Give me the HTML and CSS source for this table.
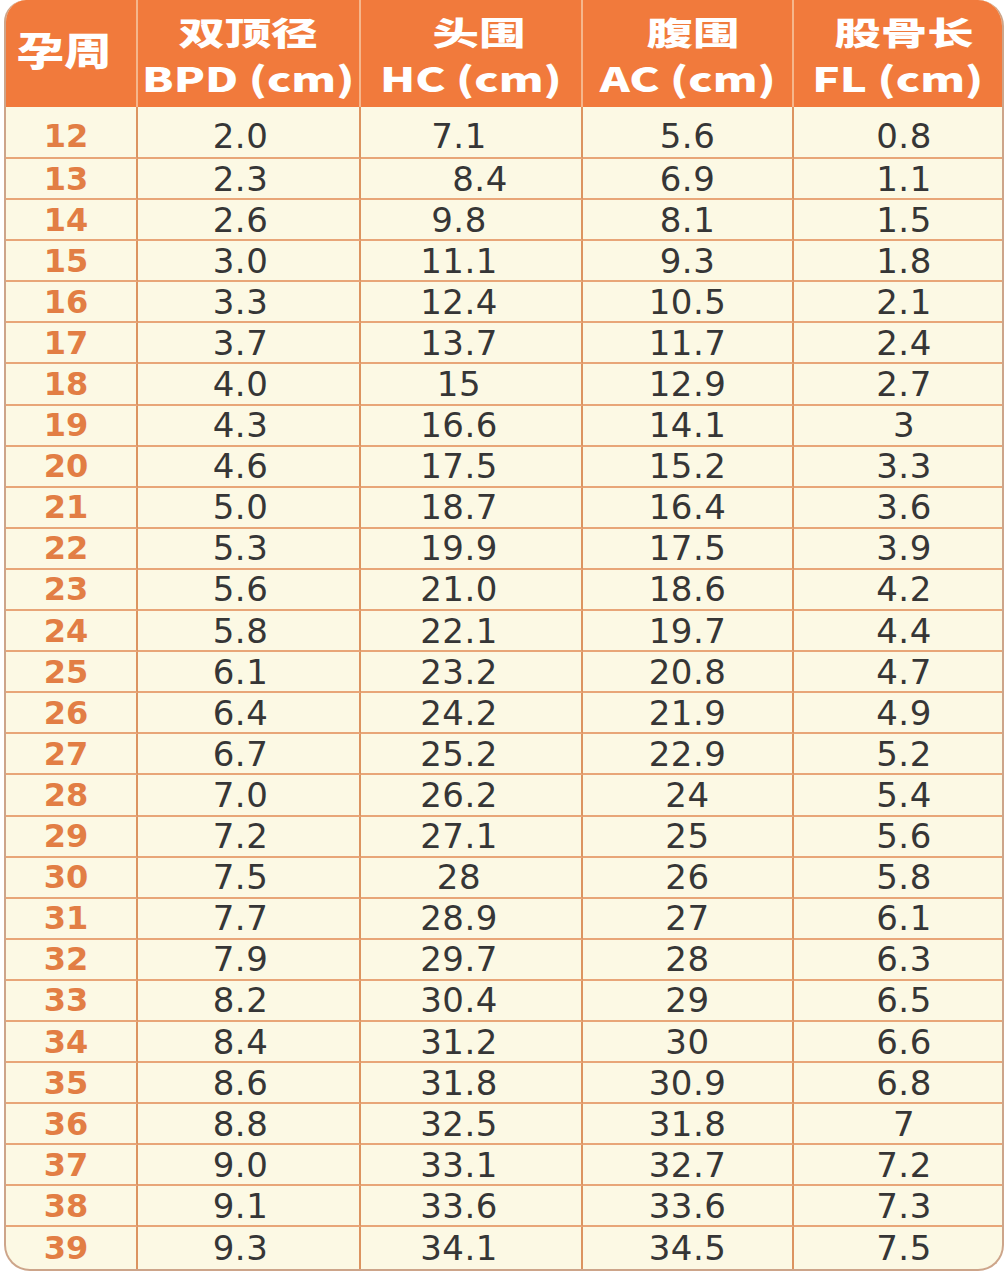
FILE: index.html
```html
<!DOCTYPE html>
<html lang="zh-CN">
<head>
<meta charset="utf-8">
<title>孕周胎儿发育标准表</title>
<link rel="stylesheet" href="styles.css">
</head>
<body>
<div class="sheet">
  <div class="grid">
    <div class="hd hd-week"><span class="t-big">孕周</span></div>
    <div class="hd"><span class="t-cn">双顶径</span><span class="t-en">BPD (cm)</span></div>
    <div class="hd hd-hc"><span class="t-cn">头围</span><span class="t-en">HC (cm)</span></div>
    <div class="hd hd-ac"><span class="t-cn">腹围</span><span class="t-en">AC (cm)</span></div>
    <div class="hd hd-last"><span class="t-cn">股骨长</span><span class="t-en">FL (cm)</span></div>

    <div class="c wk first">12</div><div class="c bpd first">2.0</div><div class="c hc first">7.1</div><div class="c ac first">5.6</div><div class="c fl first">0.8</div>
    <div class="c wk">13</div><div class="c bpd">2.3</div><div class="c hc hc-off">8.4</div><div class="c ac">6.9</div><div class="c fl">1.1</div>
    <div class="c wk">14</div><div class="c bpd">2.6</div><div class="c hc">9.8</div><div class="c ac">8.1</div><div class="c fl">1.5</div>
    <div class="c wk">15</div><div class="c bpd">3.0</div><div class="c hc">11.1</div><div class="c ac">9.3</div><div class="c fl">1.8</div>
    <div class="c wk">16</div><div class="c bpd">3.3</div><div class="c hc">12.4</div><div class="c ac">10.5</div><div class="c fl">2.1</div>
    <div class="c wk">17</div><div class="c bpd">3.7</div><div class="c hc">13.7</div><div class="c ac">11.7</div><div class="c fl">2.4</div>
    <div class="c wk">18</div><div class="c bpd">4.0</div><div class="c hc">15</div><div class="c ac">12.9</div><div class="c fl">2.7</div>
    <div class="c wk">19</div><div class="c bpd">4.3</div><div class="c hc">16.6</div><div class="c ac">14.1</div><div class="c fl">3</div>
    <div class="c wk">20</div><div class="c bpd">4.6</div><div class="c hc">17.5</div><div class="c ac">15.2</div><div class="c fl">3.3</div>
    <div class="c wk">21</div><div class="c bpd">5.0</div><div class="c hc">18.7</div><div class="c ac">16.4</div><div class="c fl">3.6</div>
    <div class="c wk">22</div><div class="c bpd">5.3</div><div class="c hc">19.9</div><div class="c ac">17.5</div><div class="c fl">3.9</div>
    <div class="c wk">23</div><div class="c bpd">5.6</div><div class="c hc">21.0</div><div class="c ac">18.6</div><div class="c fl">4.2</div>
    <div class="c wk">24</div><div class="c bpd">5.8</div><div class="c hc">22.1</div><div class="c ac">19.7</div><div class="c fl">4.4</div>
    <div class="c wk">25</div><div class="c bpd">6.1</div><div class="c hc">23.2</div><div class="c ac">20.8</div><div class="c fl">4.7</div>
    <div class="c wk">26</div><div class="c bpd">6.4</div><div class="c hc">24.2</div><div class="c ac">21.9</div><div class="c fl">4.9</div>
    <div class="c wk">27</div><div class="c bpd">6.7</div><div class="c hc">25.2</div><div class="c ac">22.9</div><div class="c fl">5.2</div>
    <div class="c wk">28</div><div class="c bpd">7.0</div><div class="c hc">26.2</div><div class="c ac">24</div><div class="c fl">5.4</div>
    <div class="c wk">29</div><div class="c bpd">7.2</div><div class="c hc">27.1</div><div class="c ac">25</div><div class="c fl">5.6</div>
    <div class="c wk">30</div><div class="c bpd">7.5</div><div class="c hc">28</div><div class="c ac">26</div><div class="c fl">5.8</div>
    <div class="c wk">31</div><div class="c bpd">7.7</div><div class="c hc">28.9</div><div class="c ac">27</div><div class="c fl">6.1</div>
    <div class="c wk">32</div><div class="c bpd">7.9</div><div class="c hc">29.7</div><div class="c ac">28</div><div class="c fl">6.3</div>
    <div class="c wk">33</div><div class="c bpd">8.2</div><div class="c hc">30.4</div><div class="c ac">29</div><div class="c fl">6.5</div>
    <div class="c wk">34</div><div class="c bpd">8.4</div><div class="c hc">31.2</div><div class="c ac">30</div><div class="c fl">6.6</div>
    <div class="c wk">35</div><div class="c bpd">8.6</div><div class="c hc">31.8</div><div class="c ac">30.9</div><div class="c fl">6.8</div>
    <div class="c wk">36</div><div class="c bpd">8.8</div><div class="c hc">32.5</div><div class="c ac">31.8</div><div class="c fl">7</div>
    <div class="c wk">37</div><div class="c bpd">9.0</div><div class="c hc">33.1</div><div class="c ac">32.7</div><div class="c fl">7.2</div>
    <div class="c wk">38</div><div class="c bpd">9.1</div><div class="c hc">33.6</div><div class="c ac">33.6</div><div class="c fl">7.3</div>
    <div class="c wk last">39</div><div class="c bpd last">9.3</div><div class="c hc last">34.1</div><div class="c ac last">34.5</div><div class="c fl last">7.5</div>
  </div>
</div>
</body>
</html>
```

FILE: styles.css
```css
html, body {
  margin: 0;
  padding: 0;
  background: #ffffff;
}

body {
  padding: 0 0 0 4px;
  font-family: "DejaVu Sans", Verdana, sans-serif;
}

.sheet {
  width: 1000px;
  box-sizing: border-box;
  border: 2px solid #cda58a;
  border-top: 0;
  border-radius: 22px 26px 26px 26px;
  overflow: hidden;
  background: #fcf9e4;
}

.grid {
  display: grid;
  grid-template-columns: 132px 223px 222px 211px 208px;
  grid-template-rows: 107px 52px repeat(27, 41.1px);
}

.hd {
  background: #f17a3c;
  color: #ffffff;
  border-right: 2px solid #f5b68c;
  display: flex;
  flex-direction: column;
  align-items: center;
  font-family: "Noto Sans CJK SC", sans-serif;
  font-weight: 900;
  white-space: nowrap;
}

.hd-last {
  border-right: 0;
}

.hd-week {
  justify-content: center;
  padding-bottom: 12px;
  padding-right: 14px;
  box-sizing: border-box;
}

.t-big {
  display: inline-block;
  font-size: 39px;
  line-height: 44px;
  transform: scaleX(1.22);
}

.t-cn {
  display: block;
  margin-top: 8px;
  font-size: 32px;
  line-height: 46px;
  transform: scaleX(1.45);
}

.hd-hc .t-cn {
  transform: translateX(8px) scaleX(1.45);
}

.hd-ac .t-cn {
  transform: translateX(6px) scaleX(1.45);
}

.hd-last .t-cn {
  transform: translateX(6px) scaleX(1.45);
}

.t-en {
  display: block;
  font-size: 34px;
  line-height: 48px;
  font-weight: 800;
  transform: scaleX(1.34);
}

.c {
  display: flex;
  align-items: center;
  justify-content: center;
  box-sizing: border-box;
  border-right: 2px solid #dc9460;
  border-bottom: 2px solid #e8a678;
  font-size: 34px;
  color: #363636;
  letter-spacing: 0.5px;
}

.c.first {
  padding-top: 8px;
}

.c.last {
  border-bottom: 0;
}

.wk {
  font-weight: bold;
  font-size: 32px;
  color: #e27e44;
  padding-right: 10px;
  letter-spacing: 0;
}

.bpd {
  padding-right: 16px;
}

.hc {
  padding-right: 24px;
}

.hc-off {
  padding-right: 0;
  padding-left: 18px;
}

.fl {
  border-right: 0;
  padding-left: 12px;
}
```
